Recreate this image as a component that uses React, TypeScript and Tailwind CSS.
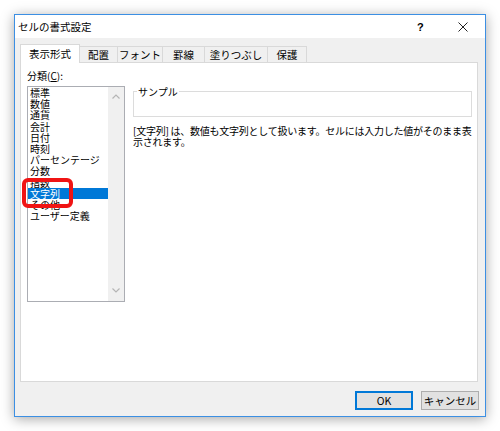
import React from "react";

const tabs = [
  { label: "表示形式", cls: "w-[60px] h-[19px] bg-white border border-b-0 border-[#d9d9d9]" },
  { label: "配置", cls: "w-[38px] h-[16px] mb-px border-t border-r border-[#d9d9d9]" },
  { label: "フォント", cls: "w-[45px] h-[16px] mb-px border-t border-r border-[#d9d9d9]" },
  { label: "罫線", cls: "w-[42px] h-[16px] mb-px border-t border-r border-[#d9d9d9]" },
  { label: "塗りつぶし", cls: "w-[63px] h-[16px] mb-px border-t border-r border-[#d9d9d9]" },
  { label: "保護", cls: "w-[39px] h-[16px] mb-px border-t border-r border-[#d9d9d9]" },
];

const items = [
  "標準",
  "数値",
  "通貨",
  "会計",
  "日付",
  "時刻",
  "パーセンテージ",
  "分数",
  "指数",
  "文字列",
  "その他",
  "ユーザー定義",
];

export default function App() {
  return (
    <div className="w-[500px] h-[431px] bg-white pt-[14px] pl-[14px] font-['Noto_Sans_CJK_JP','Noto_Sans',sans-serif] text-black">
      <div className="w-[472px] h-[403px] border border-[#3c8fe3] flex flex-col shadow-[0_2px_12px_rgba(0,0,0,0.35)]">
        {/* Title bar */}
        <div className="h-[23px] bg-white flex items-center pl-[3px] shrink-0">
          <span className="text-[10.5px] leading-[12px]">セルの書式設定</span>
          <div className="ml-auto flex items-center pr-[17px]">
            <span className="w-[6px] text-center text-[11px] font-bold leading-[12px] mr-[35px] font-['Liberation_Sans',sans-serif]">?</span>
            <svg width="10" height="10" viewBox="0 0 10 10">
              <path d="M0.5 0.5 L9.5 9.5 M9.5 0.5 L0.5 9.5" stroke="#222" strokeWidth="1" />
            </svg>
          </div>
        </div>

        {/* Body */}
        <div className="flex-1 bg-[#f0f0f0] flex flex-col pl-[5px] pr-[7px] pt-[6px]">
          {/* Tabs */}
          <div className="flex items-end relative z-10 -mb-px">
            {tabs.map((t) => (
              <div key={t.label} className={`${t.cls} flex items-center justify-center text-[10.5px] leading-[12px]`}>
                {t.label}
              </div>
            ))}
          </div>

          {/* Panel */}
          <div className="h-[320px] bg-white border border-[#d9d9d9] flex items-start pt-[7px] pl-[6px]">
            {/* Left column */}
            <div className="w-[98px] flex flex-col">
              <div className="text-[10px] leading-[12px]">
                分類(<span className="underline">C</span>):
              </div>
              <div className="mt-[4px] h-[216px] border border-[#abadb3] flex relative">
                <div className="flex-1 flex flex-col">
                  {items.map((it) => (
                    <div
                      key={it}
                      className={
                        it === "文字列"
                          ? "h-[11.2px] leading-[11.2px] text-[10px] pl-[2px] bg-[#0078d7] text-white whitespace-nowrap"
                          : "h-[11.2px] leading-[11.2px] text-[10px] pl-[2px] whitespace-nowrap"
                      }
                    >
                      {it}
                    </div>
                  ))}
                </div>
                <div className="w-[16px] bg-[#f0f0f0] flex flex-col items-center justify-between pt-[7px] pb-[8px]">
                  <svg width="8" height="5" viewBox="0 0 8 5">
                    <path d="M0.5 4.5 L4 1 L7.5 4.5" fill="none" stroke="#b5b5b5" strokeWidth="1.2" />
                  </svg>
                  <svg width="8" height="5" viewBox="0 0 8 5">
                    <path d="M0.5 0.5 L4 4 L7.5 0.5" fill="none" stroke="#b5b5b5" strokeWidth="1.2" />
                  </svg>
                </div>
                <div className="absolute left-[-6px] top-[91px] w-[51px] h-[30px] border-[4px] border-[#f01414] rounded-[6px]" />
              </div>
            </div>

            {/* Right column */}
            <div className="ml-[8px] w-[339px] mt-[16px] flex flex-col">
              <fieldset className="border border-[#dcdcdc] h-[31px] pl-[3px]">
                <legend className="px-[1px] text-[10px] leading-[11px]">サンプル</legend>
              </fieldset>
              <div className="mt-[9px] text-[10px] leading-[10.5px] tracking-[-0.25px] whitespace-nowrap">
                [文字列] は、数値も文字列として扱います。セルには入力した値がそのまま表
                <br />
                示されます。
              </div>
            </div>
          </div>

          {/* Buttons */}
          <div className="mt-[9px] flex justify-end gap-[8px] -mr-px">
            <div className="w-[58px] h-[19px] border-2 border-[#0078d7] bg-[#e1e1e1] flex items-center justify-center text-[10.5px] leading-[12px]">
              OK
            </div>
            <div className="w-[58px] h-[19px] border border-[#adadad] bg-[#e1e1e1] flex items-center justify-center text-[10.5px] leading-[12px]">
              キャンセル
            </div>
          </div>
        </div>
      </div>
    </div>
  );
}
